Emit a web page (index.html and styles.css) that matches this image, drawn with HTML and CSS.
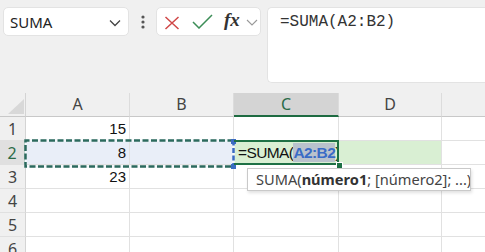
FILE: index.html
```html
<!DOCTYPE html>
<html lang="es">
<head>
    <meta charset="UTF-8">
    <meta name="viewport" content="width=device-width, initial-scale=1.0">
    <title>SUMA</title>
    <link rel="stylesheet" href="styles.css">
</head>
<body>
    <div class="toolbar">
        <div class="name-box">
            <span class="name-text">SUMA</span>
            <svg class="name-chevron" width="12" height="8" viewBox="0 0 12 8"><polyline points="1,1.5 6,6.5 11,1.5" fill="none" stroke="#444" stroke-width="1.3"/></svg>
        </div>
        <div class="grip">
            <svg width="4" height="14" viewBox="0 0 4 14"><circle cx="2" cy="2" r="1.6" fill="#555"/><circle cx="2" cy="7" r="1.6" fill="#555"/><circle cx="2" cy="12" r="1.6" fill="#555"/></svg>
        </div>
        <div class="fx-group">
            <svg class="icon-cancel" width="16" height="14" viewBox="0 0 16 14"><path d="M1.5 1 L14.5 13 M14.5 1 L1.5 13" stroke="#d04848" stroke-width="1.5" fill="none"/></svg>
            <svg class="icon-enter" width="21" height="15" viewBox="0 0 21 15"><polyline points="1,8 7,14 20,1" fill="none" stroke="#3c8d57" stroke-width="1.5"/></svg>
            <span class="fx">fx</span>
            <svg class="fx-chevron" width="12" height="7" viewBox="0 0 12 7"><polyline points="1,1 6,6 11,1" fill="none" stroke="#999" stroke-width="1.1"/></svg>
        </div>
        <div class="formula-bar">=SUMA(A2:B2)</div>
    </div>

    <div class="sheet">
        <div class="grid">
            <div class="corner"><svg width="26" height="24" viewBox="0 0 26 24"><polygon points="24,6 24,21 8,21" fill="#d8d8d8"/></svg></div>
            <div class="col-head">A</div>
            <div class="col-head">B</div>
            <div class="col-head active">C</div>
            <div class="col-head">D</div>
            <div class="col-head last"></div>

            <div class="row-head">1</div>
            <div class="cell num">15</div>
            <div class="cell"></div>
            <div class="cell"></div>
            <div class="cell"></div>
            <div class="cell last"></div>

            <div class="row-head active">2</div>
            <div class="cell num picked">8</div>
            <div class="cell picked"></div>
            <div class="cell editing"><span>=SUMA(</span><span class="ref">A2:B2</span><span>)</span><span class="caret"></span></div>
            <div class="cell editing-tail"></div>
            <div class="cell last"></div>

            <div class="row-head">3</div>
            <div class="cell num">23</div>
            <div class="cell"></div>
            <div class="cell"></div>
            <div class="cell"></div>
            <div class="cell last"></div>

            <div class="row-head">4</div>
            <div class="cell"></div>
            <div class="cell"></div>
            <div class="cell"></div>
            <div class="cell"></div>
            <div class="cell last"></div>

            <div class="row-head">5</div>
            <div class="cell"></div>
            <div class="cell"></div>
            <div class="cell"></div>
            <div class="cell"></div>
            <div class="cell last"></div>

            <div class="row-head">6</div>
            <div class="cell"></div>
            <div class="cell"></div>
            <div class="cell"></div>
            <div class="cell"></div>
            <div class="cell last"></div>
        </div>

        <svg class="marquee" width="214" height="32" viewBox="0 0 214 32">
            <rect x="1.5" y="1.5" width="208" height="26" fill="none" stroke="#f4f7fb" stroke-width="2.5"/>
            <path d="M209.5 1.5 H1.5 V27.5 H209.5" fill="none" stroke="#2c6a5e" stroke-width="2.5" stroke-dasharray="6 2.5"/>
            <path d="M209.5 1.5 V27.5" fill="none" stroke="#3b6cc2" stroke-width="2.5" stroke-dasharray="5 2.5"/>
            <rect x="207" y="0" width="5" height="5" fill="#3b6cc2"/>
            <rect x="207" y="25" width="5" height="5" fill="#3b6cc2"/>
        </svg>
        <div class="active-cell"></div>
        <div class="fill-handle"></div>

        <div class="tooltip">SUMA(<b>número1</b>; [número2]; ...)</div>
    </div>
</body>
</html>
```

FILE: styles.css
```css
body {
    margin: 0;
    background-color: #f0f0f0;
    font-family: "Noto Sans", Arial, sans-serif;
    color: #222;
    overflow: hidden;
}
.toolbar {
    display: flex;
    align-items: flex-start;
    padding: 7px 0 10px 3px;
    height: 76px;
}
.name-box {
    width: 126px;
    height: 29px;
    box-sizing: border-box;
    background-color: white;
    border: 1px solid #e3e3e3;
    border-radius: 5px;
    display: flex;
    align-items: center;
    justify-content: space-between;
    padding: 0 7px 0 6px;
}
.name-text {
    font-size: 15px;
    color: #222;
}
.name-chevron {
    margin-top: 2px;
}
.grip {
    width: 27px;
    height: 29px;
    display: flex;
    align-items: center;
    justify-content: center;
}
.fx-group {
    width: 105px;
    height: 29px;
    box-sizing: border-box;
    background-color: white;
    border: 1px solid #e3e3e3;
    border-radius: 5px;
    display: flex;
    align-items: center;
    padding-left: 7px;
}
.icon-cancel {
    margin-top: 2px;
}
.icon-enter {
    margin-left: 12px;
    margin-top: -1px;
}
.fx {
    font-family: "Liberation Serif", "Times New Roman", serif;
    font-style: italic;
    font-weight: bold;
    font-size: 19px;
    color: #333;
    margin-left: 11px;
    margin-top: -3px;
}
.fx-chevron {
    margin-left: 6px;
    margin-top: 1px;
}
.formula-bar {
    flex: 1;
    margin-left: 6px;
    height: 76px;
    box-sizing: border-box;
    background-color: white;
    border: 1px solid #e3e3e3;
    border-radius: 5px 0 0 5px;
    border-right: none;
    padding: 5px 0 0 12px;
    font-family: "Liberation Mono", "Courier New", monospace;
    font-size: 16px;
    color: #333;
}
.sheet {
    position: relative;
}
.grid {
    display: grid;
    grid-template-columns: 26px 104px 104px 105px 103px 1fr;
    grid-auto-rows: 24px;
}
.grid > div {
    box-sizing: border-box;
}
.corner {
    border-right: 1px solid #d4d4d4;
    border-bottom: 1px solid #c8c8c8;
}
.corner svg {
    display: block;
}
.col-head {
    background-color: #f0f0f0;
    border-right: 1px solid #dcdcdc;
    border-bottom: 1px solid #c8c8c8;
    text-align: center;
    font-size: 16px;
    line-height: 23px;
    color: #444;
}
.col-head.active {
    background-color: #d4d4d4;
    border-bottom: 2px solid #1e6b41;
    color: #2b6b48;
}
.col-head.last {
    border-right: none;
}
.row-head {
    background-color: #f0f0f0;
    border-right: 1px solid #d4d4d4;
    border-bottom: 1px solid #e0e0e0;
    text-align: center;
    font-size: 16px;
    line-height: 24px;
    color: #444;
}
.row-head.active {
    background-color: #e0e0e0;
    color: #2b6b48;
    border-right: 2px solid #1e6b41;
}
.cell {
    background-color: white;
    border-right: 1px solid #e1e1e1;
    border-bottom: 1px solid #e1e1e1;
    font-family: "Liberation Sans", Arial, sans-serif;
    font-size: 15px;
    line-height: 24px;
    color: #111;
    white-space: nowrap;
}
.cell.last {
    border-right: none;
}
.cell.num {
    text-align: right;
    padding-right: 3px;
}
.cell.picked {
    background-color: #e9eef8;
}
.cell.editing {
    background-color: #d9efd3;
    padding-left: 4px;
    font-size: 15.5px;
    letter-spacing: -0.6px;
    display: flex;
    align-items: center;
}
.cell.editing-tail {
    background-color: #d9efd3;
}
.ref {
    color: #3a6cc6;
    font-weight: bold;
    background-color: #b9c2cc;
    line-height: 19px;
}
.caret {
    display: inline-block;
    width: 1px;
    height: 20px;
    background-color: #111;
}
.marquee {
    position: absolute;
    left: 24px;
    top: 46px;
}
.active-cell {
    position: absolute;
    left: 234px;
    top: 47px;
    width: 105px;
    height: 25px;
    box-sizing: border-box;
    border: 2px solid #1e7145;
    border-left: none;
}
.fill-handle {
    position: absolute;
    left: 336px;
    top: 69px;
    width: 5px;
    height: 5px;
    background-color: #1e7145;
    border: 1px solid white;
}
.tooltip {
    position: absolute;
    left: 247px;
    top: 75px;
    width: 224px;
    height: 23px;
    box-sizing: border-box;
    background-color: white;
    border: 1px solid #c9c9c9;
    box-shadow: 1px 2px 3px rgba(0,0,0,0.12);
    padding: 0 0 0 8px;
    font-family: "Noto Sans", Arial, sans-serif;
    font-size: 14.6px;
    line-height: 21px;
    color: #444;
    white-space: nowrap;
    overflow: hidden;
}
.tooltip b {
    color: #333;
}
```
